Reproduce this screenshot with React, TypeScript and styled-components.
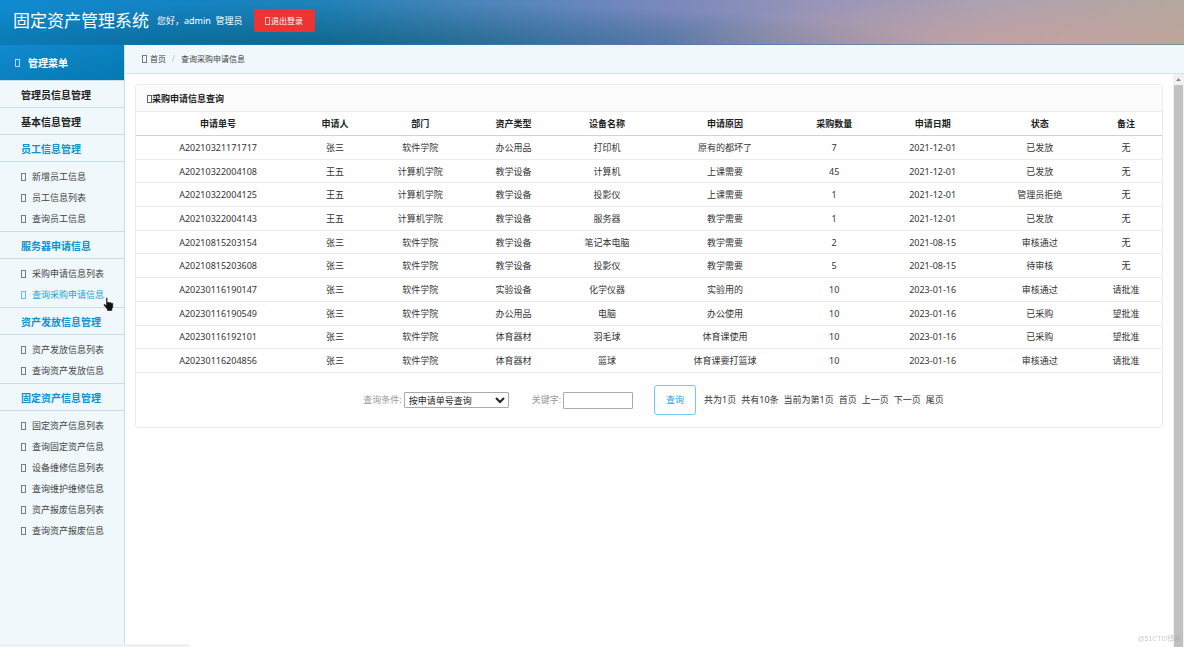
import React from "react";
import styled, { createGlobalStyle } from "styled-components";

const GlobalStyle = createGlobalStyle`
  *, *::before, *::after { box-sizing: border-box; }
  body {
    margin: 0;
    background: #fff;
    color: #333;
    font-family: "Noto Sans", "Noto Sans CJK SC", sans-serif;
    font-size: 9px;
    line-height: 14px;
  }
  a { color: inherit; text-decoration: none; }
  ul { list-style: none; margin: 0; padding: 0; }
  button, input, select { font: inherit; }
`;

const Page = styled.div`
  display: flex;
  flex-direction: column;
  min-height: 100vh;
`;

const Header = styled.header`
  display: flex;
  align-items: center;
  height: 45px;
  padding: 0 13px 3px;
  border-bottom: 1px solid rgba(0, 84, 140, 0.3);
  color: #fff;
  background:
    radial-gradient(ellipse 30% 120% at 86% 110%, rgba(208, 160, 150, 0.65), rgba(208, 160, 150, 0)),
    radial-gradient(ellipse 52% 110% at 29% 115%, rgba(0, 80, 105, 0.6), rgba(0, 80, 105, 0)),
    linear-gradient(100deg, #0f8ad0 0%, #1384c4 14%, #1f82b8 27%, #4584b8 38%, #6486be 48%, #7a88bc 56%, #9a96b8 70%, #aca2b2 84%, #b5a89c 100%);
`;

const SiteTitle = styled.h1`
  margin: 0 8px 0 0;
  font-size: 17px;
  line-height: 24px;
  font-weight: 400;
`;

const Greeting = styled.span`
  margin-right: 11px;
  white-space: pre;
`;

const LogoutButton = styled.button`
  display: flex;
  align-items: center;
  justify-content: center;
  width: 61px;
  height: 23px;
  padding: 0;
  border: 0;
  border-radius: 2px;
  background: #ee3333;
  color: #fff;
  font-size: 8px;
`;

const Glyph = styled.i<{ $gap?: number }>`
  display: inline-block;
  flex: none;
  width: 5px;
  height: 8px;
  margin-right: ${(p) => p.$gap ?? 0}px;
  border: 1px solid currentColor;
  opacity: 0.7;
`;

const Body = styled.div`
  display: flex;
  flex: 1;
`;

const Sidebar = styled.nav`
  display: flex;
  flex-direction: column;
  flex: none;
  width: 125px;
  border-right: 1px solid #c4dfec;
  background: #f0f8fc;
`;

const MenuTitle = styled.div`
  display: flex;
  align-items: center;
  height: 35px;
  padding: 0 15px;
  background: linear-gradient(165deg, #118ad0, #0478b0);
  color: #fff;
  font-size: 10px;
  font-weight: 700;
`;

const SectionLink = styled.a<{ $open?: boolean }>`
  display: flex;
  align-items: center;
  height: 27px;
  padding: 1px 21px 0;
  border-top: 1px solid #c9e0ec;
  color: ${(p) => (p.$open ? "#0c93cd" : "#222")};
  font-size: 10px;
  font-weight: 700;
`;

const SubMenu = styled.ul`
  padding: 4px 0 2px;
  border-top: 1px solid #c9e0ec;
`;

const SubItem = styled.li`
  position: relative;
  padding-left: 21px;
`;

const SubLink = styled.a<{ $active?: boolean }>`
  display: flex;
  align-items: center;
  height: 21px;
  color: ${(p) => (p.$active ? "#27a3d8" : "#444")};
`;

const HandPointer = styled.svg`
  position: absolute;
  left: 103px;
  top: 13px;
  z-index: 1;
`;

const Main = styled.main`
  display: flex;
  flex-direction: column;
  flex: 1;
  min-width: 0;
`;

const Breadcrumb = styled.nav`
  display: flex;
  align-items: center;
  height: 29px;
  padding: 0 17px;
  border-bottom: 1px solid #cfe2ee;
  background: #f0f8fc;
  color: #444;
  font-size: 8px;
`;

const Divider = styled.span`
  margin: 0 6px;
  color: #bbb;
`;

const Viewport = styled.div`
  display: flex;
  flex: 1;
`;

const Content = styled.div`
  flex: 1;
  min-width: 0;
  padding: 10px;
`;

const ScrollTrack = styled.div`
  display: flex;
  flex-direction: column;
  flex: none;
  width: 11px;
  padding: 0 1px;
  background: #f1f1f1;
`;

const ScrollArrow = styled.svg`
  display: block;
  height: 11px;
  width: 9px;
`;

const ScrollThumb = styled.div`
  flex: 1;
  background: #c1c1c1;
`;

const Card = styled.section`
  border: 1px solid #ebebeb;
  border-radius: 3px;
  overflow: hidden;
`;

const CardTitle = styled.h2`
  display: flex;
  align-items: center;
  height: 27px;
  margin: 0;
  padding: 1px 11px 0;
  border-bottom: 1px solid #ebebeb;
  background: #fcfcfc;
  color: #222;
  font-size: 9px;
  font-weight: 700;
`;

const Table = styled.table`
  width: 100%;
  height: 261px;
  table-layout: fixed;
  border-collapse: separate;
  border-spacing: 0;
  text-align: center;
  th {
    height: 24px;
    padding: 1px 0 0;
    border-bottom: 1px solid #d2d2d2;
    color: #222;
  }
  td {
    height: 23px;
    padding: 1px 0 0;
    border-bottom: 1px solid #ebebeb;
  }
`;

const Col = styled.col<{ $share: number }>`
  width: ${(p) => p.$share}%;
`;

const SearchForm = styled.form`
  display: flex;
  align-items: center;
  justify-content: center;
  height: 54px;
  padding-left: 9px;
`;

const FieldLabel = styled.label`
  margin-right: 2px;
  color: #999;
`;

const ConditionSelect = styled.select`
  width: 105px;
  height: 16px;
  margin-right: 23px;
  padding: 0;
  border: 1px solid #aaa;
  border-radius: 1px;
  background-color: #fff;
  color: #222;
  line-height: 12px;
`;

const KeywordInput = styled.input`
  width: 70px;
  height: 17px;
  margin-right: 21px;
  padding: 0 2px;
  border: 1px solid #aaa;
  border-radius: 1px;
`;

const SearchButton = styled.button`
  width: 42px;
  height: 30px;
  margin-right: 8px;
  padding: 0;
  border: 1px solid #6ccbf5;
  border-radius: 3px;
  background: #fff;
  color: #1ca5e8;
`;

const Pager = styled.div`
  display: flex;
  gap: 5px;
`;

const StatusBubble = styled.div`
  position: fixed;
  left: 0;
  bottom: 0;
  width: 190px;
  height: 3px;
  border-top-right-radius: 3px;
  background: #f0f0f0;
`;

const Watermark = styled.div`
  position: fixed;
  right: 3px;
  bottom: 1px;
  color: rgba(170, 170, 170, 0.6);
  font-family: "Liberation Sans", "Noto Sans CJK SC", sans-serif;
  font-size: 7px;
`;

type Section = { title: string; items: string[] };

const sections: Section[] = [
  { title: "管理员信息管理", items: [] },
  { title: "基本信息管理", items: [] },
  { title: "员工信息管理", items: ["新增员工信息", "员工信息列表", "查询员工信息"] },
  { title: "服务器申请信息", items: ["采购申请信息列表", "查询采购申请信息"] },
  { title: "资产发放信息管理", items: ["资产发放信息列表", "查询资产发放信息"] },
  {
    title: "固定资产信息管理",
    items: ["固定资产信息列表", "查询固定资产信息", "设备维修信息列表", "查询维护维修信息", "资产报废信息列表", "查询资产报废信息"],
  },
];

const activeItem = "查询采购申请信息";

const columns: [string, number][] = [
  ["申请单号", 16],
  ["申请人", 6.8],
  ["部门", 9.8],
  ["资产类型", 8.4],
  ["设备名称", 9.8],
  ["申请原因", 13.2],
  ["采购数量", 8.1],
  ["申请日期", 11.1],
  ["状态", 9.8],
  ["备注", 7],
];

const rows: string[][] = [
  ["A20210321171717", "张三", "软件学院", "办公用品", "打印机", "原有的都坏了", "7", "2021-12-01", "已发放", "无"],
  ["A20210322004108", "王五", "计算机学院", "教学设备", "计算机", "上课需要", "45", "2021-12-01", "已发放", "无"],
  ["A20210322004125", "王五", "计算机学院", "教学设备", "投影仪", "上课需要", "1", "2021-12-01", "管理员拒绝", "无"],
  ["A20210322004143", "王五", "计算机学院", "教学设备", "服务器", "教学需要", "1", "2021-12-01", "已发放", "无"],
  ["A20210815203154", "张三", "软件学院", "教学设备", "笔记本电脑", "教学需要", "2", "2021-08-15", "审核通过", "无"],
  ["A20210815203608", "张三", "软件学院", "教学设备", "投影仪", "教学需要", "5", "2021-08-15", "待审核", "无"],
  ["A20230116190147", "张三", "软件学院", "实验设备", "化学仪器", "实验用的", "10", "2023-01-16", "审核通过", "请批准"],
  ["A20230116190549", "张三", "软件学院", "办公用品", "电脑", "办公使用", "10", "2023-01-16", "已采购", "望批准"],
  ["A20230116192101", "张三", "软件学院", "体育器材", "羽毛球", "体育课使用", "10", "2023-01-16", "已采购", "望批准"],
  ["A20230116204856", "张三", "软件学院", "体育器材", "篮球", "体育课要打篮球", "10", "2023-01-16", "审核通过", "请批准"],
];

export default function App() {
  return (
    <Page>
      <GlobalStyle />
      <Header>
        <SiteTitle>固定资产管理系统</SiteTitle>
        <Greeting>{"您好，admin  管理员"}</Greeting>
        <LogoutButton type="button">
          <Glyph $gap={1} />
          退出登录
        </LogoutButton>
      </Header>
      <Body>
        <Sidebar>
          <MenuTitle>
            <Glyph $gap={8} />
            管理菜单
          </MenuTitle>
          {sections.map((section) => (
            <React.Fragment key={section.title}>
              <SectionLink href="#" $open={section.items.length > 0}>
                {section.title}
              </SectionLink>
              {section.items.length > 0 && (
                <SubMenu>
                  {section.items.map((item) => (
                    <SubItem key={item}>
                      <SubLink href="#" $active={item === activeItem}>
                        <Glyph $gap={6} />
                        {item}
                      </SubLink>
                      {item === activeItem && (
                        <HandPointer width="11" height="15" viewBox="0 0 11 15" aria-hidden="true">
                          <path
                            d="M3 1.2c0-1 1.6-1 1.6 0v4l1-.4.9.5 1-.2.8.7 1-.1.9.9v3.6l-1 2V14H4v-1.6L1.2 9 .5 7.4c.3-.8 1.2-.7 1.7-.1l.8.9z"
                            fill="#111"
                            stroke="#fff"
                            strokeWidth="0.4"
                          />
                        </HandPointer>
                      )}
                    </SubItem>
                  ))}
                </SubMenu>
              )}
            </React.Fragment>
          ))}
        </Sidebar>
        <Main>
          <Breadcrumb>
            <Glyph $gap={3} />
            <a href="#">首页</a>
            <Divider>/</Divider>
            <span>查询采购申请信息</span>
          </Breadcrumb>
          <Viewport>
            <Content>
              <Card>
                <CardTitle>
                  <Glyph />
                  采购申请信息查询
                </CardTitle>
                <Table>
                  <colgroup>
                    {columns.map(([name, share]) => (
                      <Col key={name} $share={share} />
                    ))}
                  </colgroup>
                  <thead>
                    <tr>
                      {columns.map(([name]) => (
                        <th key={name}>{name}</th>
                      ))}
                    </tr>
                  </thead>
                  <tbody>
                    {rows.map((row) => (
                      <tr key={row[0]}>
                        {row.map((cell, i) => (
                          <td key={i}>{cell}</td>
                        ))}
                      </tr>
                    ))}
                  </tbody>
                </Table>
                <SearchForm onSubmit={(e) => e.preventDefault()}>
                  <FieldLabel htmlFor="condition">查询条件:</FieldLabel>
                  <ConditionSelect id="condition">
                    <option>按申请单号查询</option>
                  </ConditionSelect>
                  <FieldLabel htmlFor="keyword">关键字:</FieldLabel>
                  <KeywordInput id="keyword" type="text" />
                  <SearchButton type="submit">查询</SearchButton>
                  <Pager>
                    <span>共为1页</span>
                    <span>共有10条</span>
                    <span>当前为第1页</span>
                    <a href="#">首页</a>
                    <a href="#">上一页</a>
                    <a href="#">下一页</a>
                    <a href="#">尾页</a>
                  </Pager>
                </SearchForm>
              </Card>
            </Content>
            <ScrollTrack aria-hidden="true">
              <ScrollArrow viewBox="0 0 9 11">
                <path d="M2 7l2.500-3L7 7z" fill="#8a8a8a" />
              </ScrollArrow>
              <ScrollThumb />
            </ScrollTrack>
          </Viewport>
        </Main>
      </Body>
      <StatusBubble />
      <Watermark>@51CTO博客</Watermark>
    </Page>
  );
}
